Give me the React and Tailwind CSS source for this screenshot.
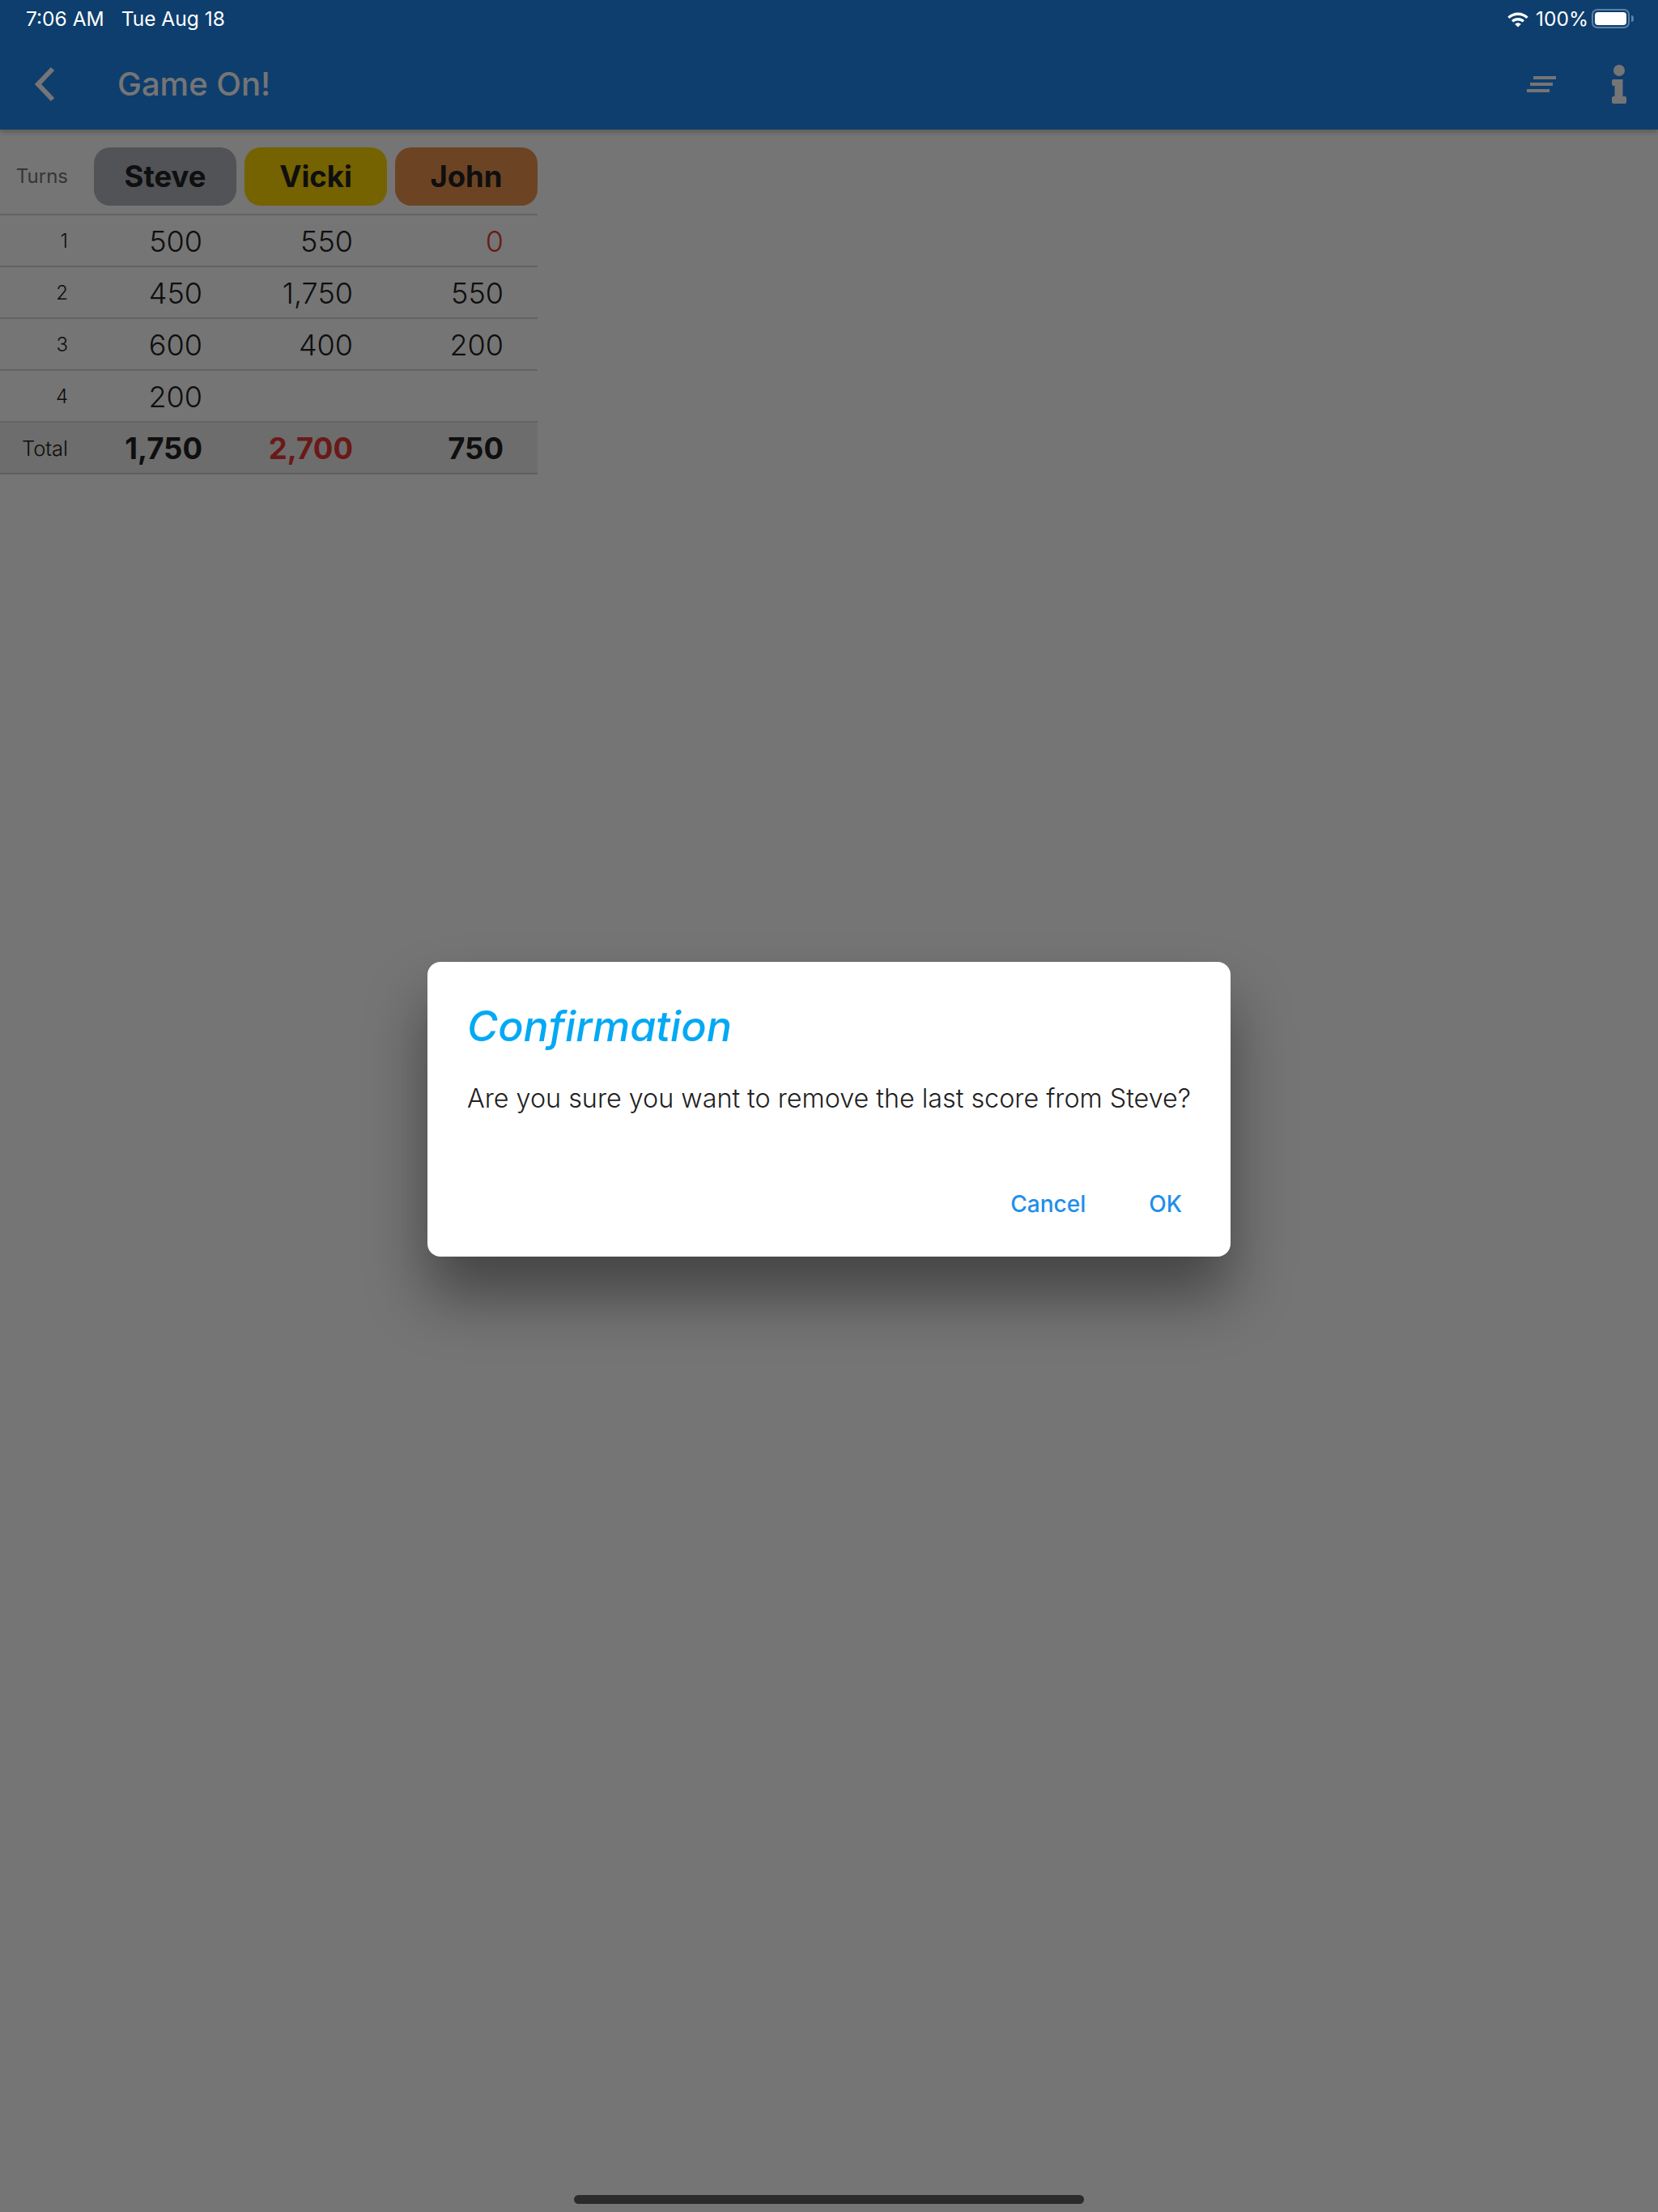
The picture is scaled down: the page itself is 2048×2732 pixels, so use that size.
import React from 'react';

const rows = [
  { turn: 1, scores: ['500', '550', '0'] },
  { turn: 2, scores: ['450', '1,750', '550'] },
  { turn: 3, scores: ['600', '400', '200'] },
  { turn: 4, scores: ['200', '', ''] },
];

function StatusBar() {
  return (
    <div className="relative z-20 flex h-[44px] items-center justify-between pl-[32px] pr-[30px] pt-[2px] text-[24.5px] text-white">
      <div className="flex gap-[21px]">
        <span>7:06 AM</span>
        <span>Tue Aug 18</span>
      </div>
      <div className="flex items-center">
        <svg width="28" height="22" viewBox="0 0 28 22" fill="white">
          <path d="M14 3.5c4.9 0 9.4 2 12.7 5.2l-2.3 2.4C21.700 8.500 18 7 14 7S6.300 8.500 3.600 11.100L1.300 8.700C4.600 5.500 9.100 3.500 14 3.500z" />
          <path d="M14 10c3.100 0 5.900 1.200 8 3.200l-2.400 2.400C18.100 14.200 16.100 13.400 14 13.400s-4.100.8-5.600 2.200L6 13.200C8.100 11.200 10.900 10 14 10z" />
          <path d="M14 16.200c1.500 0 2.800.6 3.800 1.500L14 21.500l-3.800-3.800c1-.9 2.300-1.500 3.800-1.500z" />
        </svg>
        <span className="ml-[8px]">100%</span>
        <div className="ml-[4px] flex items-center gap-[2px]">
          <div className="flex h-[24px] w-[47px] rounded-[7px] border-2 border-[#5c82a8] p-[2px]">
            <div className="flex-1 rounded-[4px] bg-white" />
          </div>
          <div className="h-[8px] w-[3px] rounded-r-full bg-[#5c82a8]" />
        </div>
      </div>
    </div>
  );
}

function AppBar() {
  return (
    <div className="flex h-[116px] items-center justify-between pt-[4px] pl-[38px] pr-[39px]">
      <div className="flex items-center gap-[77px]">
        <svg width="30" height="44" viewBox="0 0 30 44" fill="none" stroke="white" strokeWidth="6">
          <path d="M27 3 L9 22 L27 41" />
        </svg>
        <span className="text-[40px] font-medium text-white">Game On!</span>
      </div>
      <div className="flex items-center gap-[69px]">
        <svg width="36" height="20" viewBox="0 0 36 20" fill="white">
          <rect x="8" y="0" width="28" height="4" />
          <rect x="4" y="8" width="28" height="4" />
          <rect x="0" y="16" width="28" height="4" />
        </svg>
        <svg width="18" height="48" viewBox="0 0 18 48" fill="white">
          <circle cx="9" cy="7" r="7" />
          <path d="M0 20q0-2 2-2h11.500V39H16q2 0 2 2v5q0 2-2 2H2q-2 0-2-2v-5q0-2 2-2h1.500V26H2q-2 0-2-2z" />
        </svg>
      </div>
    </div>
  );
}

function ScoreTable() {
  return (
    <div className="w-[664px] text-[#212121]">
      <div className="flex h-[106px] items-start border-b-2 border-[#d8d8d8] pt-[22px]">
        <div className="h-[72px] w-[84px] text-right text-[24px] leading-[72px] text-[#757575]">Turns</div>
        <div className="ml-[32px] flex gap-[10px]">
          <div className="flex h-[72px] w-[176px] items-center justify-center rounded-[20px] bg-[#b0b5bd] text-[36.500px] font-bold">Steve</div>
          <div className="flex h-[72px] w-[176px] items-center justify-center rounded-[20px] bg-[#ffd600] text-[36.500px] font-bold">Vicki</div>
          <div className="flex h-[72px] w-[176px] items-center justify-center rounded-[20px] bg-[#ec954e] text-[36.500px] font-bold">John</div>
        </div>
      </div>
      {rows.map((row) => (
        <div key={row.turn} className="flex h-[64px] items-center border-b-2 border-[#d8d8d8] pt-[2px]">
          <div className="w-[84px] text-right text-[24px] font-light">{row.turn}</div>
          {row.scores.map((score, i) => (
            <div
              key={i}
              className={`text-right text-[36px] font-light ${i === 0 ? 'w-[166px]' : 'w-[186px]'} ${score === '0' ? 'text-[#e53935]' : ''}`}
            >
              {score}
            </div>
          ))}
        </div>
      ))}
      <div className="flex h-[64px] items-center border-b-2 border-[#d0d0d0] bg-[#eeeeee] pt-[2px]">
        <div className="w-[84px] text-right text-[25.500px] font-light">Total</div>
        <div className="w-[166px] text-right text-[36.500px] font-bold">1,750</div>
        <div className="w-[186px] text-right text-[36.500px] font-bold text-[#e53935]">2,700</div>
        <div className="w-[186px] text-right text-[36.500px] font-bold">750</div>
      </div>
    </div>
  );
}

function ConfirmDialog() {
  return (
    <div className="flex h-[364px] w-[992px] flex-col rounded-[16px] bg-white pl-[49px] pr-[48px] pt-[48px] shadow-[0_48px_76px_rgba(0,0,0,0.42)]">
      <div className="text-[52px] italic font-medium leading-[64px] text-[#03a9f4]">Confirmation</div>
      <div className="mt-[35px] whitespace-nowrap text-[32.300px] font-light leading-[44px] text-[#212121]">
        Are you sure you want to remove the last score from Steve?
      </div>
      <div className="mt-[90px] flex justify-end gap-[78px] pr-[12px] text-[28px] font-medium leading-[36px] text-[#1e8fea]">
        <span>Cancel</span>
        <span>OK</span>
      </div>
    </div>
  );
}

export default function App() {
  return (
    <div className="relative h-[2732px] w-[2048px] overflow-hidden bg-white font-['Inter',sans-serif]">
      <div className="bg-[#2088ee] shadow-[0_3px_6px_rgba(0,0,0,0.25)]">
        <StatusBar />
        <AppBar />
      </div>
      <ScoreTable />

      {/* Dim layer, the status bar stays above it */}
      <div className="absolute inset-0 z-10 bg-black/54" />

      <div className="absolute inset-0 z-10 flex items-start justify-center pt-[1188px]">
        <ConfirmDialog />
      </div>

      <div className="absolute bottom-[10px] left-1/2 z-20 h-[11px] w-[630px] -translate-x-1/2 rounded-full bg-[#2b2b2b]" />
    </div>
  );
}
